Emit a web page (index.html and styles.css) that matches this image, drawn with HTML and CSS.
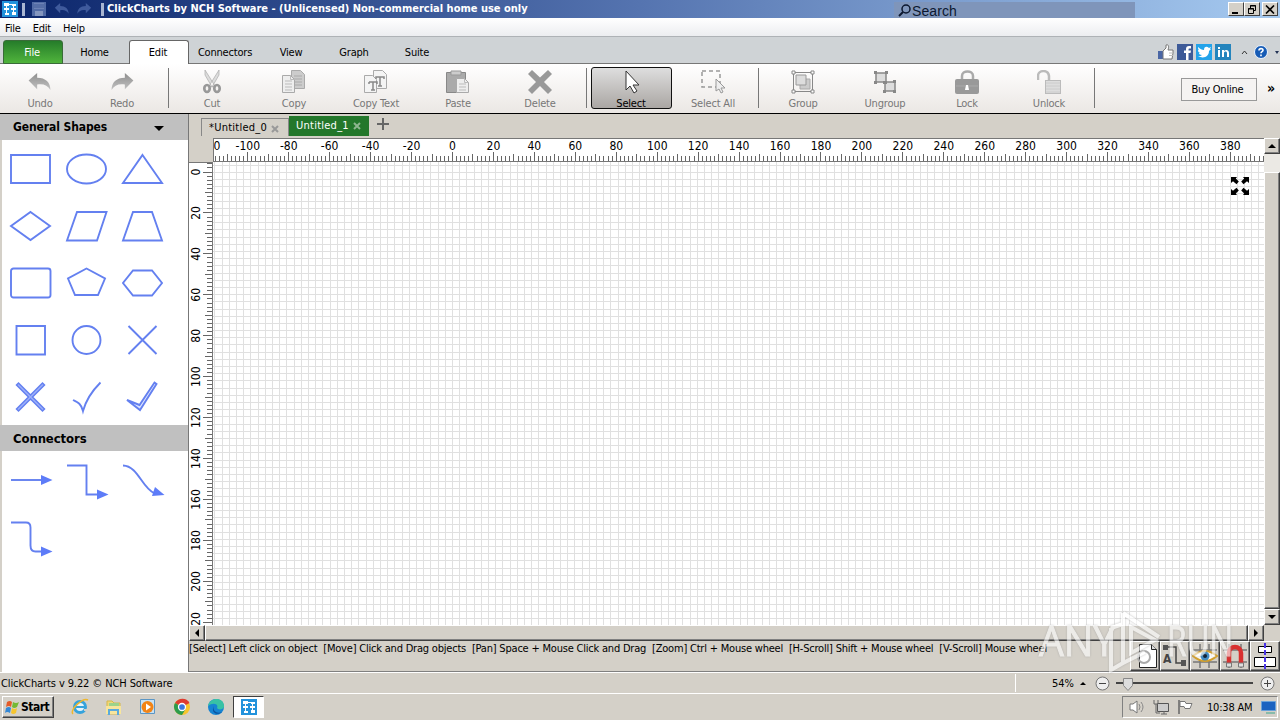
FILE: index.html
```html
<!DOCTYPE html>
<html lang="en">
<head>
  <meta charset="UTF-8">
  <title>ClickCharts by NCH Software</title>
  <link rel="stylesheet" href="styles.css">
</head>
<body>
  <svg width="0" height="0" class="defs">
    <defs>
      <linearGradient id="gray" x1="0" y1="0" x2="0" y2="1"><stop offset="0" stop-color="#8e8e8e"/><stop offset="1" stop-color="#c2c2c2"/></linearGradient>
      <symbol id="app" viewBox="0 0 16 16"><rect width="16" height="16" fill="#2393dc"/><path d="M4.500 5v7M11.500 5v8M7 3.500h3" stroke="#fff" fill="none"/><path d="M2 2h5v3H2zM10 3h4v2h-4zM2 7h5v2H2zM3 12h4v2H3zM9 7h5v2H9zM10 11h4v3h-4z" fill="#fff"/></symbol>
      <symbol id="undo" viewBox="0 0 24 20"><path d="M0 8L9 0v5c9 0 14 5 14 13-3-5-7-7-14-6v5z"/></symbol>
    </defs>
  </svg>

  <header class="titlebar">
    <svg class="app-icon" width="16" height="16"><use href="#app"/></svg>
    <span class="grip"></span>
    <svg class="quick" width="16" height="16"><path d="M1 1h14v14H1z" fill="#526ba5"/><path d="M3 2h10v6H3z" fill="#6d82b5"/><path d="M3 4h10M3 6h10" stroke="#405a98"/><path d="M4 10h8v5H4z" fill="#8496bf"/></svg>
    <svg class="quick-undo" width="16" height="12"><use href="#undo" fill="#3f5a9c"/></svg>
    <svg class="quick-redo" width="16" height="12"><use href="#undo" fill="#3f5a9c" transform="translate(16 0) scale(-1 1)"/></svg>
    <span class="grip"></span>
    <span class="title">ClickCharts by NCH Software - (Unlicensed) Non-commercial home use only</span>
    <div class="search">
      <svg width="13" height="13"><circle cx="8" cy="5" r="4" fill="none" stroke="#0c1830" stroke-width="1.5"/><path d="M5 8L1 12" stroke="#0c1830" stroke-width="2"/></svg>
      <span>Search</span>
    </div>
    <div class="win-buttons">
      <span class="win"><svg width="10" height="9"><path d="M1 7h6v2H1z"/></svg></span>
      <span class="win"><svg width="10" height="9"><path d="M3.500 3V.5h5v5H7M3 1h6M1.500 3.500h5v5h-5zM1 4h6" fill="none" stroke="#000"/></svg></span>
      <span class="win close"><svg width="10" height="9"><path d="M1 .5l8 8M9 .5l-8 8" stroke="#000" stroke-width="1.6"/></svg></span>
    </div>
  </header>

  <nav class="menubar"><span>File</span><span>Edit</span><span>Help</span></nav>

  <nav class="ribbon-tabs">
    <span class="rtab file">File</span>
    <span class="rtab home">Home</span>
    <span class="rtab current">Edit</span>
    <span class="rtab conn">Connectors</span>
    <span class="rtab">View</span>
    <span class="rtab graph">Graph</span>
    <span class="rtab">Suite</span>
    <div class="social">
      <svg width="16" height="16"><path d="M0 7h5v8H0z" fill="#4a66a5"/><path d="M5 7l3-3V1c3-1 3 2 2 5h5v3l-1 6H5z" fill="#fff" stroke="#777"/><path d="M11 9h4M11 11.500h4" stroke="#bbb"/></svg>
      <svg width="16" height="16"><rect width="16" height="16" fill="#3d5a98"/><path d="M9 16V9H7V6.500h2V5c0-2 1-3 3-3h2v2.500h-1.500c-1 0-1 .5-1 2H14L13.500 9h-2v7z" fill="#fff"/></svg>
      <svg width="16" height="16"><rect width="16" height="16" fill="#23a3ea"/><path d="M2 3c2 2 4 3 6 3 0-4 3-4 5-2l2-1-1 2 1 0-2 2c0 6-6 8-11 5 2 0 3 0 4-1-2 0-3-1-3-2h1C2 8 2 7 2 6l1 .3C2 5 2 4 2 3z" fill="#fff"/></svg>
      <svg width="16" height="16"><rect width="16" height="16" fill="#2484bd"/><path d="M3 6h2v7H3zM3 3h2v2H3zM7 6h2v1c2-2 5-1 5 2v4h-2V9c0-2-3-2-3 0v4H7z" fill="#fff"/></svg>
      <svg class="chev" width="7" height="5"><path d="M1 4l2.500-3L6 4" fill="none" stroke="#333"/></svg>
      <svg class="help" width="14" height="14"><circle cx="7" cy="7" r="6.500" fill="#165bb5" stroke="#eef5ff"/><path d="M5 5.500C5 3 9 3 9 5.200c0 1.500-2 1.400-2 3M7 9.600v1.600" fill="none" stroke="#fff" stroke-width="1.600"/></svg>
      <svg class="drop" width="4" height="3"><path d="M0 0h4L2 3z" fill="#235"/></svg>
    </div>
  </nav>

  <section class="toolbar">
    <div class="tool first"><svg width="24" height="24"><use href="#undo" y="3" width="24" height="19" fill="url(#gray)"/></svg><span>Undo</span></div>
    <div class="tool"><svg width="24" height="24"><use href="#undo" y="3" width="24" height="19" fill="url(#gray)" transform="translate(24 0) scale(-1 1)"/></svg><span>Redo</span></div>
    <i class="sep"></i>
    <div class="tool"><svg width="24" height="24"><path d="M5 0l10 16-3 1L5 5zM19 0L9 16l3 1 7-12z" fill="#ddd" stroke="#aaa" stroke-width=".7"/><ellipse cx="7" cy="18.500" rx="2.700" ry="3.500" fill="none" stroke="#999" stroke-width="2.700"/><ellipse cx="17" cy="18.500" rx="2.700" ry="3.500" fill="none" stroke="#999" stroke-width="2.700"/></svg><span>Cut</span></div>
    <div class="tool"><svg width="24" height="24"><path d="M9.500.5h9l4 4v14h-13z" fill="#ccc" stroke="#aaa"/><path d="M12 6h8M12 9h8M12 12h8M12 15h8" stroke="#aaa"/><path d="M.5 5.500h8l4 4v13H.5z" fill="#eee" stroke="#aaa"/><path d="M8.500 5.500v4h4M3 11h7M3 14h7M3 17h7M3 20h7" fill="none" stroke="#bbb"/></svg><span>Copy</span></div>
    <div class="tool"><svg width="24" height="24"><path d="M9.500.5h9l4 4v14h-13z" fill="#f4f4f4" stroke="#aaa"/><path d="M.5 5.500h8l4 4v13H.5z" fill="#f4f4f4" stroke="#aaa"/><path d="M5 12h8v2M5 12v2M9 12v8M7 20h4M12 9V7h8v2M16 7v9M14 16h4" fill="none" stroke="#888" stroke-width="1.500"/></svg><span>Copy Text</span></div>
    <div class="tool"><svg width="24" height="24"><path d="M.5 2.500h19v20H.5z" fill="#aaa" stroke="#888"/><path d="M5 1h10v4H5z" fill="#ccc" stroke="#999"/><path d="M10.500 8.500h8l4 4v10h-12z" fill="#eee" stroke="#aaa"/><path d="M18.500 8.500v4h4M13 14h7M13 17h7M13 20h7" fill="none" stroke="#bbb"/></svg><span>Paste</span></div>
    <div class="tool"><svg width="24" height="24"><path d="M0 4l4-4 8 7.500L20 0l4 4-8 8 8 8-4 4-8-8-8 8-4-4 8-8z" fill="#999"/></svg><span>Delete</span></div>
    <i class="sep wide"></i>
    <div class="tool selected"><svg width="24" height="24"><path d="M7 1v19l4-4 4 7 3-2-4-6h6z" fill="#fff" stroke="#333"/></svg><span>Select</span></div>
    <div class="tool"><svg width="24" height="24"><path d="M1 1h18v16H1z" fill="none" stroke="#999" stroke-width="1.500" stroke-dasharray="4 3"/><path d="M15 9v12l3-2 2 4 2-1-2-4h4z" fill="#eee" stroke="#999"/></svg><span>Select All</span></div>
    <i class="sep short"></i>
    <div class="tool"><svg width="24" height="24"><path d="M2.500 2.500h19v19h-19z" fill="none" stroke="#888"/><path d="M9 9h10v10H9z" fill="#ccc" stroke="#aaa"/><path d="M5 5h10v10H5z" fill="#ddd" stroke="#999"/><path d="M1 1h3v3H1zM20 1h3v3h-3zM1 20h3v3H1zM20 20h3v3h-3z" fill="#fff" stroke="#888"/></svg><span>Group</span></div>
    <div class="tool"><svg width="24" height="24"><path d="M3 3h10v9H3zM12 12h10v9H12z" fill="#ddd" stroke="#888" stroke-width="1.500"/><path d="M1 1h3v3H1zM12 1h3v3h-3zM1 11h3v3H1zM10 11h4v3h-4zM20 10h3v3h-3zM10 20h3v3h-3zM20 20h3v3h-3z" fill="#888"/></svg><span>Ungroup</span></div>
    <div class="tool"><svg width="24" height="24"><path d="M7 10V6c0-6 11-6 11 0v4" fill="none" stroke="#aaa" stroke-width="2.500"/><rect y="9" width="24" height="15" rx="2" fill="#999"/><path d="M1 16h22" stroke="#aaa"/><path d="M11 15h2l1 5h-4z" fill="#fff"/></svg><span>Lock</span></div>
    <div class="tool"><svg width="24" height="24"><path d="M1 10V6c0-6 10-7 11 0v4" fill="none" stroke="#bbb" stroke-width="2.500"/><rect x="8.500" y="10.500" width="15" height="13" fill="#ddd" stroke="#bbb"/><path d="M9 13h14M9 16h14M9 19h14M9 22h14" stroke="#ccc"/></svg><span>Unlock</span></div>
    <i class="sep short"></i>
    <button class="buy">Buy Online</button>
    <span class="more">»</span>
  </section>

  <main class="workspace">
    <aside class="sidebar">
      <h2 class="shapes-head">General Shapes <svg width="10" height="5"><path d="M0 0h10L5 5z"/></svg></h2>
      <div class="shapes">
        <svg viewBox="0 0 42 32"><path d="M1 2h39v28H1z"/></svg>
        <svg viewBox="0 0 42 32"><ellipse cx="20.500" cy="16" rx="19.500" ry="14.500"/></svg>
        <svg viewBox="0 0 42 32"><path d="M20.500 2L40 30H1z"/></svg>
        <svg viewBox="0 0 42 32"><path d="M20.500 2L40 16 20.500 30 1 16z"/></svg>
        <svg viewBox="0 0 42 32"><path d="M11 2h29.500L31 30.500H1z"/></svg>
        <svg viewBox="0 0 42 32"><path d="M11 2h19l10 28.500H1z"/></svg>
        <svg viewBox="0 0 42 32"><rect x="1" y="1.500" width="39.500" height="29" rx="2.500"/></svg>
        <svg viewBox="0 0 42 32"><path d="M20.500 1.500l18.500 10-7 16.500H9L2 11.500z"/></svg>
        <svg viewBox="0 0 42 32"><path d="M11 3.500h19l10 12.500-10 12.500H11L1 16z"/></svg>
        <svg viewBox="0 0 42 32"><path d="M6.500 2h28.500v28.500H6.500z"/></svg>
        <svg viewBox="0 0 42 32"><circle cx="20.500" cy="16" r="14"/></svg>
        <svg viewBox="0 0 42 32"><path d="M6.500 2l28 28M34.500 2l-28 28"/></svg>
        <svg viewBox="0 0 42 32"><path d="M6.500 4l2-2 12 12 12-12 2 2-12 12 12 12-2 2-12-12-12 12-2-2 12-12z" fill="#9db0fa" stroke-width="1.500"/></svg>
        <svg viewBox="0 0 42 32"><path d="M7 19c4 2 8 3 10 11C20 19 27 9 34.500 1.500"/></svg>
        <svg viewBox="0 0 42 32"><path d="M5 19l13 10L34.500 3l-2-1.500L17.500 24z" fill="#dfe6ff"/></svg>
      </div>
      <h2>Connectors</h2>
      <div class="shapes connectors">
        <svg viewBox="0 0 42 32"><path d="M1 16h32"/><path class="tip" d="M31 11l11.500 5L31 21z"/></svg>
        <svg viewBox="0 0 42 32"><path d="M1 1.500h19.500V30.500H33"/><path class="tip" d="M31 25.500l11.500 5-11.500 5z"/></svg>
        <svg viewBox="0 0 42 32"><path d="M1 1.500C16 2 20 24 32 29"/><path class="tip" d="M33 23l9.500 8-12.500 1z"/></svg>
        <svg viewBox="0 0 42 32"><path d="M1 1.500h15q4.500 0 4.500 5v18q0 6 5 6H33"/><path class="tip" d="M31 25.500l11.500 5-11.500 5z"/></svg>
      </div>
    </aside>

    <section class="editor">
      <div class="doc-tabs">
        <span class="doc">*Untitled_0<svg width="8" height="8"><path d="M1 1l6 6M7 1L1 7"/></svg></span>
        <span class="doc active">Untitled_1<svg width="8" height="8"><path d="M1 1l6 6M7 1L1 7"/></svg></span>
        <svg class="plus" width="12" height="12"><path d="M6 0v12M0 6h12" stroke="#666" stroke-width="2"/></svg>
      </div>
      <div class="canvas-grid">
        <div class="corner"></div>
        <svg class="ruler-top" id="rulerTop" width="1051" height="24"></svg>
        <svg class="ruler-left" id="rulerLeft" width="24" height="463"></svg>
        <div class="canvas">
          <svg id="grid" width="1051" height="463"></svg>
          <svg class="expand" width="18" height="18"><path d="M0 0h6L4.800 1.500l3 3-2.300 2.800-3.500-3L0 6zM18 0h-6l1.200 1.500-3 3 2.300 2.800 3.500-3L18 6zM0 18h6l-1.200-1.500 3-3-2.300-2.800-3.500 3L0 12zM18 18h-6l1.200-1.500-3-3 2.300-2.800 3.500 3L18 12z"/></svg>
        </div>
        <div class="vscroll">
          <span class="sbtn"><svg width="8" height="4"><path d="M4 0l4 4H0z"/></svg></span>
          <span class="track"></span>
          <span class="thumb"></span>
          <span class="sbtn"><svg width="8" height="4"><path d="M0 0h8L4 4z"/></svg></span>
        </div>
      </div>
      <div class="hscroll">
        <span class="sbtn"><svg width="4" height="8"><path d="M4 0v8L0 4z"/></svg></span>
        <span class="thumb"></span>
        <span class="sbtn"><svg width="4" height="8"><path d="M0 0v8l4-4z"/></svg></span>
      </div>
      <div class="hints">
        <p>[Select] Left click on object&nbsp; [Move] Click and Drag objects&nbsp; [Pan] Space + Mouse Click and Drag&nbsp; [Zoom] Ctrl + Mouse wheel&nbsp; [H-Scroll] Shift + Mouse wheel&nbsp; [V-Scroll] Mouse wheel</p>
        <div class="toggles">
          <span><svg width="26" height="26"><path d="M7.500 1.500h12l5 5v18h-17z" fill="#fff" stroke="#222"/><path d="M19.500 1.500v5h5" fill="#ddd" stroke="#222"/><circle cx="12" cy="14" r="6" fill="none" stroke="#aaa" stroke-width="2"/></svg></span>
          <span><svg width="26" height="26"><path d="M3 4h11v16h8" fill="none" stroke="#444" stroke-width="1.500"/><path d="M1 2h5v5H1zM19 17h5v6h-5z" fill="#555"/><text x="1" y="20" font-size="12" font-weight="bold" fill="#444">A</text></svg></span>
          <span><svg width="26" height="26"><path d="M8 1v24M17 1v24M1 7h24M1 19h24" stroke="#777" stroke-width="1.500"/><path d="M1 13Q13 3 25 13 13 23 1 13z" fill="#fff" stroke="#d4a02c" stroke-width="2"/><circle cx="13" cy="13" r="4.500" fill="#438cc0"/><circle cx="13" cy="13" r="2" fill="#123"/></svg></span>
          <span><svg width="26" height="26"><path d="M7 1v24M19 1v24M1 7h24M1 19h24" stroke="#777" stroke-width="1.500"/><path d="M7 22V10c0-8 12-8 12 0v12" fill="none" stroke="#d9302f" stroke-width="4.500"/><path d="M4.500 20h5v4h-5zM16.500 20h5v4h-5z" fill="#ddd" stroke="#777"/></svg></span>
          <span><svg width="26" height="26"><path d="M6.500 3.500h13v6h-13zM2.500 14.500h21v9h-21z" fill="#fff" stroke="#000"/><path d="M13 0v26" stroke="#4b34e6" stroke-width="2" stroke-dasharray="5 2"/></svg></span>
        </div>
      </div>
    </section>
  </main>

  <footer class="status">
    <span>ClickCharts v 9.22 © NCH Software</span>
    <div class="zoom">
      <span>54%</span>
      <svg class="zup" width="6" height="3"><path d="M0 3h6L3 0z"/></svg>
      <svg width="15" height="15"><circle cx="7.500" cy="7.500" r="6.500" fill="#eee" stroke="#777"/><path d="M4 7.500h7" stroke="#444"/></svg>
      <svg class="slider" width="137" height="15"><path d="M0 7h137" stroke="#444" stroke-width="2"/><path d="M7.500 2.500h9v7l-4.500 5-4.500-5z" fill="#ddd" stroke="#888"/></svg>
      <svg width="15" height="15"><circle cx="7.500" cy="7.500" r="6.500" fill="#eee" stroke="#777"/><path d="M4 7.500h7M7.500 4v7" stroke="#444"/></svg>
    </div>
  </footer>

  <footer class="taskbar">
    <div class="start">
      <svg width="16" height="15"><path d="M3 2q3-2 5 0L7 7Q5 5 2 7z" fill="#e45b28"/><path d="M9 2q3 2 6 0l-2 5q-3 2-5 0z" fill="#75b935"/><path d="M2 8q3-2 5 0l-1 5q-3-2-5 0z" fill="#3488d6"/><path d="M8 8q3 2 5 0l-1 5q-3 2-5 0z" fill="#f6c52e"/></svg>
      Start
    </div>
    <div class="pinned">
      <svg width="18" height="18"><circle cx="9" cy="9" r="5.500" fill="#e6f4fa" stroke="#36a3dc" stroke-width="3"/><path d="M5 9h10" stroke="#36a3dc" stroke-width="2"/><path d="M13 11h5v2h-5z" fill="#d4d0c8"/><path d="M2 16C-2 12 12-1 17 2" fill="none" stroke="#efb72d" stroke-width="1.500"/></svg>
      <svg width="18" height="18"><path d="M2 3h5l2 2h6v11H2z" fill="#f1d778" stroke="#d5b74b"/><path d="M4 5h10v4H4z" fill="#9dd38a"/><path d="M1 8h15v8H1z" fill="#f8e59c"/><path d="M4 17v-5h9v5" fill="none" stroke="#5baadd" stroke-width="2"/></svg>
      <svg width="18" height="18"><path d="M1.500 1.500h14v14h-14z" fill="#c8e2f4" stroke="#5b96c5"/><circle cx="8.500" cy="9" r="6" fill="#f28416"/><path d="M7 5.500l5 3.500-5 3.500z" fill="#fff"/></svg>
      <svg width="18" height="18"><circle cx="9" cy="9" r="8" fill="#f7c52d"/><path d="M9 9L2 5C6-1 14 0 16.500 5z" fill="#df3b30"/><path d="M2 5C-1 10 3 17 9 17l3-5-3-3z" fill="#2d9c4d"/><circle cx="9" cy="9" r="3.500" fill="#3b78df" stroke="#fff" stroke-width="1.300"/></svg>
      <svg width="18" height="18"><circle cx="9" cy="9" r="8" fill="#1684d2"/><path d="M1 8C3-2 18-1 17 9c-1 3-6 3-7 1 2-4-4-6-9-2z" fill="#38c2a5"/><path d="M7 8c-2 5 3 8 8 6-4 4-12 1-8-6z" fill="#0b529d"/></svg>
    </div>
    <div class="running"><svg width="16" height="16"><use href="#app"/></svg></div>
    <div class="tray">
      <svg width="16" height="16"><path d="M1 5h3l4-3v12l-4-3H1z" fill="#fff" stroke="#777"/><path d="M10 5q2 3 0 6M12 3q4 5 0 10" fill="none" stroke="#888"/></svg>
      <svg width="16" height="16"><path d="M4.500 4.500h11v8h-11z" fill="#ccc" stroke="#555"/><path d="M8 15h6M11 12v3M1 1v4h4V1M3 5v9h4" fill="none" stroke="#666"/></svg>
      <svg width="16" height="16"><path d="M2 1v14" stroke="#666" stroke-width="1.500"/><path d="M3 2.500h5l1 2h6l-2 5H8l-1-2H3z" fill="#fff" stroke="#777"/></svg>
      <span class="clock">10:38 AM</span>
      <svg width="16" height="14"><path d="M.5 1.500h14v9H.5z" fill="#1c63c0" stroke="#6aa2d8"/><path d="M5 13h9" stroke="#8ba" stroke-width="2"/></svg>
    </div>
  </footer>

  <svg class="watermark" width="200" height="64">
    <g>
      <text x="2" y="46" textLength="76" lengthAdjust="spacingAndGlyphs">ANY</text>
      <text x="130" y="46" textLength="66" lengthAdjust="spacingAndGlyphs">RUN</text>
    </g>
    <path d="M94 17v26l24-13zM86 3l36 24M86 3v50l22-11M74 18v42l12-7M74 18l12-4"/>
  </svg>

  <script src="script.js"></script>
</body>
</html>
```
FILE: styles.css
```css
* {
  box-sizing: border-box;
}
body {
  margin: 0;
  width: 1280px;
  height: 720px;
  overflow: hidden;
  display: flex;
  flex-direction: column;
  position: relative;
  background: #d4d0c8;
  color: #000;
  font-family: "DejaVu Sans Condensed", "DejaVu Sans", sans-serif;
  font-size: 11px;
  line-height: 13px;
  letter-spacing: -0.2px;
  white-space: nowrap;
}
svg {
  display: block;
  flex: none;
}
.defs {
  position: absolute;
}

/* title bar */
.titlebar {
  height: 18px;
  flex: none;
  display: flex;
  align-items: center;
  background: linear-gradient(90deg, #0a246a, #5574b0 50%, #a6caf0);
  padding-left: 2px;
}
.grip {
  width: 3px;
  height: 13px;
  background: #a9b6d2;
  margin-left: 4px;
}
.quick { margin-left: 6px; }
.quick-undo { margin-left: 7px; }
.quick-redo { margin-left: 6px; }
.quick-redo + .grip { margin-left: 9px; }
.title {
  color: #fff;
  font-weight: bold;
  margin: -2px 0 0 3px;
  width: 422px;
  letter-spacing: 0;
}
.search {
  width: 241px;
  height: 17px;
  margin-left: 365px;
  margin-top: 3px;
  background: #7f95ba;
  display: flex;
  align-items: center;
  padding-left: 4px;
  gap: 1px;
  font: 14px "Liberation Sans", sans-serif;
  letter-spacing: 0.1px;
  color: #0c1830;
}
.win-buttons {
  display: flex;
  margin-left: 93px;
}
.win {
  width: 16px;
  height: 14px;
  background: #d4d0c8;
  border: 1px solid;
  border-color: #fff #404040 #404040 #fff;
  display: flex;
  align-items: center;
  justify-content: center;
}
.close { margin-left: 2px; }

.menubar {
  height: 19px;
  flex: none;
  display: flex;
  gap: 12px;
  padding: 4px 0 0 5px;
  background: linear-gradient(#fff, #ecedf0);
  border-bottom: 1px solid #aeb2b6;
}

/* ribbon */
.ribbon-tabs {
  height: 27px;
  flex: none;
  display: flex;
  align-items: flex-end;
  background: #cfd3d6;
  box-shadow: inset 0 -1px #777;
}
.rtab {
  width: 60px;
  height: 24px;
  text-align: center;
  padding-top: 6px;
}
.file {
  margin-left: 3px;
  color: #fff;
  background: linear-gradient(#257c2a, #50b43c);
  border: 1px solid #396b39;
  border-radius: 3px 3px 0 0;
  padding: 5px 2px 0 0;
}
.home { width: 63px; }
.current {
  margin-left: 3px;
  background: #fff;
  border: 1px solid #666;
  border-bottom: 0;
  border-radius: 3px 3px 0 0;
  padding: 5px 2px 0 0;
}
.conn { width: 72px; }
.graph { width: 66px; }
.social {
  margin-left: 711px;
  height: 24px;
  display: flex;
  align-items: center;
  gap: 3px;
}
.chev { margin-left: 7px; }
.help { margin-left: 3px; }
.drop { margin-left: 4px; }

.toolbar {
  height: 50px;
  flex: none;
  display: flex;
  align-items: flex-start;
  background: linear-gradient(#fff, #ebe7e4);
  border-bottom: 1px solid #000;
  padding-top: 3px;
}
.tool {
  width: 82px;
  height: 43px;
  flex: none;
  display: flex;
  flex-direction: column;
  align-items: center;
  padding-top: 3px;
  gap: 3px;
  color: #777;
}
.first { margin-left: -1px; }
.selected {
  width: 81px;
  height: 42px;
  border: 1px solid #111;
  border-radius: 3px;
  background: linear-gradient(#dedede, #aaa6a3);
  color: #000;
  padding: 2px 1px 0 0;
}
.sep {
  width: 8px;
  height: 40px;
  background: linear-gradient(#777, #777) 5px 0 / 1px 100% no-repeat;
  margin-top: 1px;
}
.wide { width: 10px; }
.short { background-position: 4px 0; }
.buy {
  width: 76px;
  height: 23px;
  margin: 11px 0 0 83px;
  padding: 0 3px 0 0;
  font: inherit;
  letter-spacing: inherit;
  border: 1px solid #999;
  background: #f5f3f2;
}
.more {
  margin: 15px 0 0 10px;
  font-size: 14px;
  font-weight: bold;
}

/* shape panel */
.workspace {
  height: 558px;
  flex: none;
  display: flex;
}
.sidebar {
  width: 189px;
  background: #fff;
  border-right: 1px solid #777;
  border-left: 2px solid #d4d0c8;
}
.sidebar h2 {
  margin: 0 0 0 -2px;
  height: 26px;
  padding: 0 0 0 13px;
  background: #c0c0c0;
  display: flex;
  align-items: center;
  font-size: 13px;
  letter-spacing: -0.1px;
}
.sidebar .shapes-head {
  font-size: 12px;
}
.shapes-head svg { margin: 2px 0 0 47px; }
.shapes {
  height: 285px;
  padding: 13px 0 0 8px;
  display: grid;
  grid-template-columns: repeat(3, 42px);
  grid-auto-rows: 32px;
  column-gap: 14px;
  row-gap: 25px;
  fill: none;
  stroke: #6480f0;
  stroke-width: 1.9;
}
.connectors {
  height: auto;
}
.shapes svg {
  width: 42px;
  height: 32px;
  overflow: visible;
}
.tip {
  fill: #5d7cf8;
  stroke: none;
}

/* editor */
.editor {
  width: 1091px;
  display: flex;
  flex-direction: column;
}
.doc-tabs {
  height: 24px;
  display: flex;
  align-items: flex-end;
  padding-left: 12px;
  padding-bottom: 2px;
}
.doc {
  width: 88px;
  height: 18px;
  border: 1px solid #888;
  border-bottom: 0;
  display: flex;
  align-items: center;
  padding-left: 7px;
  gap: 4px;
  letter-spacing: 0.25px;
}
.doc svg {
  margin-top: 3px;
  fill: none;
  stroke: #999;
  stroke-width: 2;
}
.active {
  width: 80px;
  height: 20px;
  background: #23772b;
  border-color: #23772b;
  color: #fff;
  padding: 0 0 2px 6px;
}
.active svg { margin-top: 1px; stroke: #8eb58f; }
.plus { margin: 0 0 6px 8px; }
.canvas-grid {
  height: 487px;
  display: grid;
  grid-template-columns: 24px 1051px 16px;
  grid-template-rows: 24px 463px;
}
.ruler-top {
  background: #fff;
  border: 1px solid #777;
  border-right: 0;
}
.ruler-left {
  background: #fff;
  border-right: 1px solid #777;
  border-top: 1px solid #777;
  grid-row: 2;
}
.ruler-top text, .ruler-left text {
  font-size: 12px;
  letter-spacing: 0;
  text-anchor: middle;
}
.canvas {
  background: #fff;
  position: relative;
}
.expand {
  position: absolute;
  left: 1018px;
  top: 15px;
}
.vscroll {
  grid-column: 3;
  grid-row: 1 / 3;
  display: flex;
  flex-direction: column;
}
.sbtn, .thumb {
  background: #d4d0c8;
  border: 1px solid;
  border-color: #fff #404040 #404040 #fff;
  box-shadow: inset -1px -1px #808080;
}
.sbtn {
  width: 16px;
  height: 16px;
  flex: none;
  display: flex;
  align-items: center;
  justify-content: center;
}
.track {
  height: 18px;
  background: #ebe9e4;
}
.thumb { flex: 1; }
.hscroll {
  height: 16px;
  width: 1075px;
  display: flex;
}
.hints {
  height: 31px;
  display: flex;
  border-bottom: 1px solid #808080;
}
.hints p {
  width: 941px;
  margin: 1px 0 0;
  letter-spacing: -0.205px;
}
.toggles {
  display: flex;
}
.toggles span {
  width: 30px;
  height: 30px;
  padding: 1px;
  border: 1px solid;
  border-color: #fff #404040 #404040 #fff;
  box-shadow: inset -1px -1px #808080;
}

/* status and taskbar */
.status {
  height: 21px;
  flex: none;
  display: flex;
  align-items: center;
  justify-content: space-between;
  padding-left: 1px;
  border-top: 1px solid #fff;
  letter-spacing: -0.1px;
}
.zoom {
  width: 265px;
  height: 18px;
  border-left: 1px solid #fff;
  padding-left: 36px;
  display: flex;
  align-items: center;
}
.zup { margin: 0 9px 0 6px; }
.slider { margin: 0 7px 0 6px; }
.taskbar {
  height: 27px;
  flex: none;
  display: flex;
  align-items: center;
  border-top: 1px solid #fff;
}
.start {
  width: 52px;
  height: 22px;
  margin-left: 2px;
  display: flex;
  align-items: center;
  padding-left: 1px;
  gap: 1px;
  font-size: 12px;
  font-weight: bold;
  letter-spacing: -0.5px;
  border: 1px solid;
  border-color: #fff #404040 #404040 #fff;
  box-shadow: inset -1px -1px #808080;
}
.pinned {
  display: flex;
  gap: 16px;
  margin-left: 17px;
}
.running {
  width: 31px;
  height: 22px;
  margin-left: 8px;
  background: #fff;
  border: 1px solid;
  border-color: #404040 #fff #fff #404040;
  display: flex;
  align-items: center;
  justify-content: center;
}
.tray {
  width: 156px;
  height: 22px;
  margin-left: 858px;
  border: 1px solid;
  border-color: #808080 #fff #fff #808080;
  display: flex;
  align-items: center;
  padding-left: 6px;
  gap: 8px;
}
.clock {
  width: 46px;
  margin-left: 6px;
}
.watermark {
  position: absolute;
  left: 1037px;
  top: 610px;
  font-family: "Open Sans", sans-serif;
  font-size: 42px;
  fill: #fff;
  opacity: 0.6;
  filter: drop-shadow(0 0 1px #999);
}
.watermark text {
  stroke: #fff;
  stroke-width: 1;
}
.watermark path {
  fill: none;
  stroke: #fff;
  stroke-width: 4;
}
```
FILE: script.js
```js
const NS = "http://www.w3.org/2000/svg";
const MM = 2.047; // pixels per millimetre at 54% zoom

function line(svg, x1, y1, x2, y2, color) {
  const el = document.createElementNS(NS, "path");
  el.setAttribute("d", `M${x1} ${y1}L${x2} ${y2}`);
  el.setAttribute("stroke", color);
  svg.appendChild(el);
}

function label(svg, x, y, value, rotate) {
  const el = document.createElementNS(NS, "text");
  el.textContent = value;
  el.setAttribute("x", x);
  el.setAttribute("y", y);
  if (rotate) el.setAttribute("transform", `rotate(-90 ${x} ${y})`);
  svg.appendChild(el);
}

const snap = v => Math.floor(v) + 0.5;
const tick = v => v % 20 === 0 ? 9 : v % 10 === 0 ? 7 : 5;

const rulerTop = document.getElementById("rulerTop");
for (let v = -120; v <= 396; v += 2) {
  const x = 238.5 + v * MM;
  if (x > 0) line(rulerTop, snap(x), 22, snap(x), 22 - tick(v), "#666");
  if (v === -120) label(rulerTop, -6, 11, v);
  else if (v % 20 === 0 && v <= 380) label(rulerTop, x, 11, v);
}

const rulerLeft = document.getElementById("rulerLeft");
for (let v = -4; v <= 220; v += 2) {
  const y = 9 + v * MM;
  line(rulerLeft, 23, snap(y), 23 - tick(v), snap(y), "#666");
  if (v % 20 === 0) label(rulerLeft, 11, y, v, true);
}

const grid = document.getElementById("grid");
for (let x = 1.9; x < 1051; x += 7.2) line(grid, snap(x), 0, snap(x), 463, "#e0e0e0");
for (let y = 3; y < 463; y += 7.2) line(grid, 0, snap(y), 1051, snap(y), "#e0e0e0");
```
